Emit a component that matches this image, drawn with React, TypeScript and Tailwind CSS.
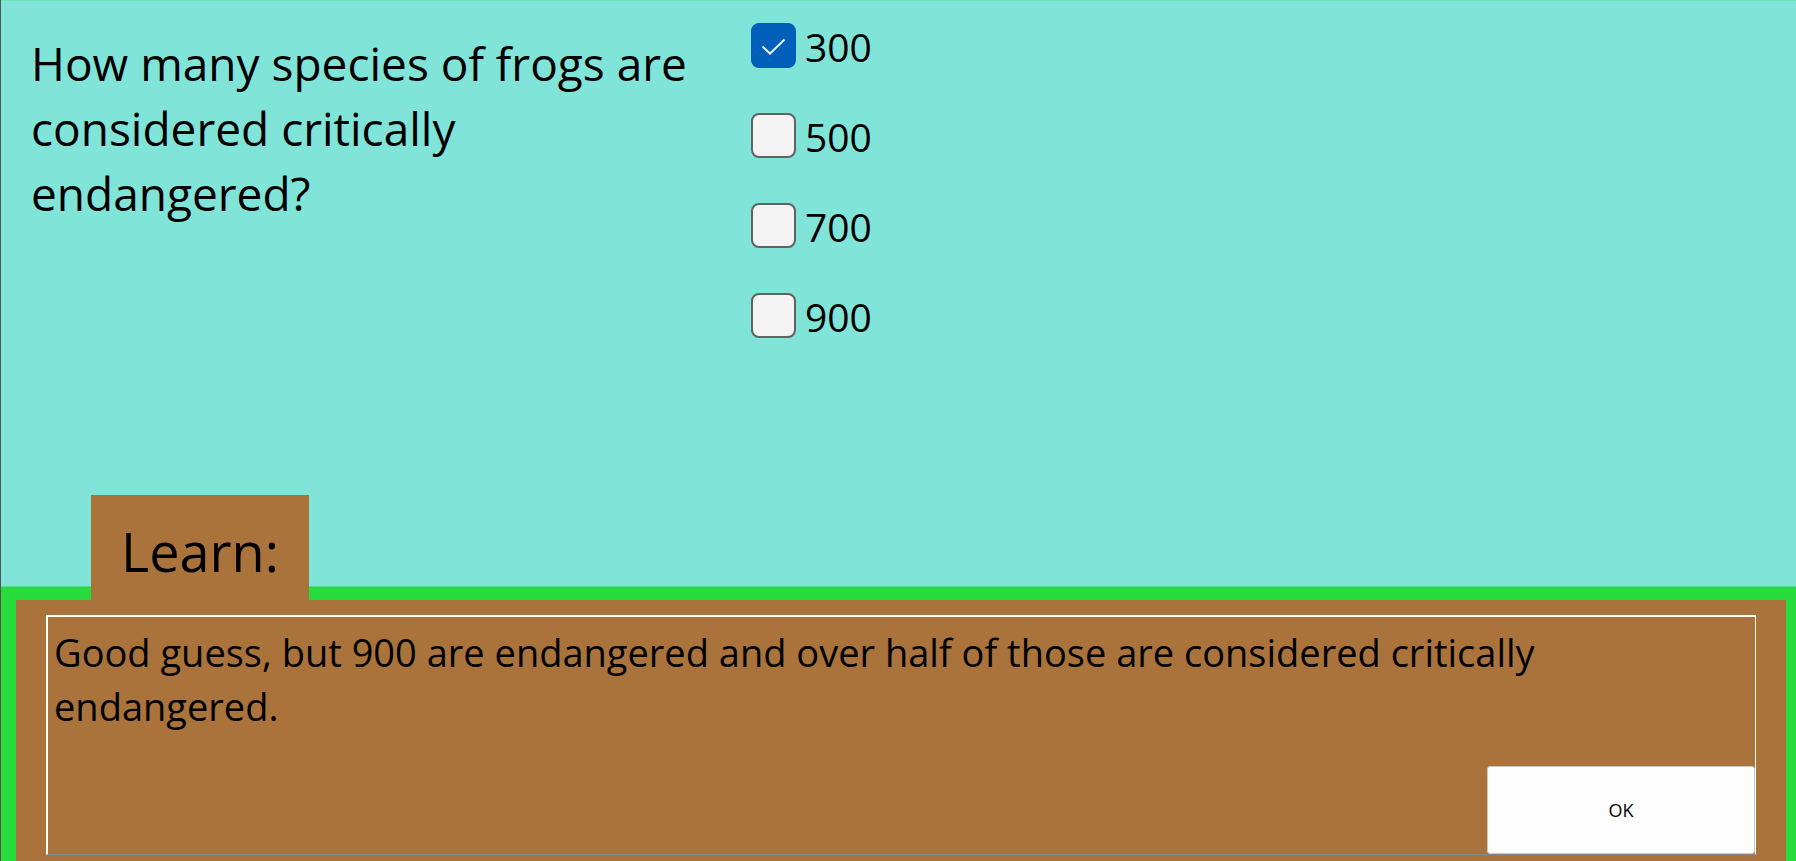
import { useState } from "react";

const answers = ["300", "500", "700", "900"];

type AnswerProps = {
  label: string;
  checked: boolean;
  onToggle: () => void;
};

function Answer({ label, checked, onToggle }: AnswerProps) {
  return (
    <label className="flex h-[45px] items-center gap-[9px]">
      <span className="grid">
        <input
          type="checkbox"
          checked={checked}
          onChange={onToggle}
          className="col-start-1 row-start-1 size-[45px] appearance-none rounded-[8px] border-2 border-[#626262] bg-[#f3f3f3] checked:border-[#005fb8] checked:bg-[#005fb8]"
        />
        {checked && (
          <svg
            viewBox="0 0 45 45"
            className="pointer-events-none col-start-1 row-start-1 size-[45px]"
            fill="none"
            stroke="#e6effa"
            strokeWidth="2"
            aria-hidden="true"
          >
            <path d="M11.5 23.5 L19 30.5 L33.5 16.5" />
          </svg>
        )}
      </span>
      <span className="pt-0.5 text-[39px] leading-[45px]">{label}</span>
    </label>
  );
}

export default function App() {
  const [selected, setSelected] = useState<string[]>(["300"]);

  const toggle = (value: string) =>
    setSelected((current) =>
      current.includes(value)
        ? current.filter((item) => item !== value)
        : [...current, value],
    );

  return (
    <main className="flex min-h-screen flex-col border-l border-[#555555] bg-[#80e4d8] font-['Open_Sans','Noto_Sans',sans-serif] text-black">
      <section className="flex grow flex-col border-t border-b border-t-[#6fe3b8] border-b-[#50e08a]">
        <div className="flex items-start">
          <h1 className="w-[750px] shrink-0 pt-[30px] pr-12 pl-[30px] text-[46px] leading-[65px]">
            How many species of frogs are considered critically endangered?
          </h1>
          <div className="flex flex-col gap-[45px] pt-[22px]">
            {answers.map((answer) => (
              <Answer
                key={answer}
                label={answer}
                checked={selected.includes(answer)}
                onToggle={() => toggle(answer)}
              />
            ))}
          </div>
        </div>
        <h2 className="z-10 mt-auto -mb-[14px] ml-[90px] self-start bg-[#a9733b] px-[30px] pt-4 pb-[9px] text-[54px] leading-[80px]">
          Learn:
        </h2>
      </section>
      <section className="border-t-[13px] border-r-[10px] border-l-[15px] border-[#28dc3e] bg-[#a9733b] px-[30px] pt-[15px] pb-[6px]">
        <div className="flex h-[240px] flex-col border-t-2 border-r border-b border-l-2 border-white border-b-[#858585]">
          <p className="px-[6px] pt-2 text-[38px] leading-[54px]">
            Good guess, but 900 are endangered and over half of those are
            considered critically endangered.
          </p>
          <button
            type="button"
            className="mt-auto h-[88px] w-[268px] self-end rounded-[3px] border border-[#c8c8c8] bg-[#fdfdfd] text-[18px]"
          >
            OK
          </button>
        </div>
      </section>
    </main>
  );
}
